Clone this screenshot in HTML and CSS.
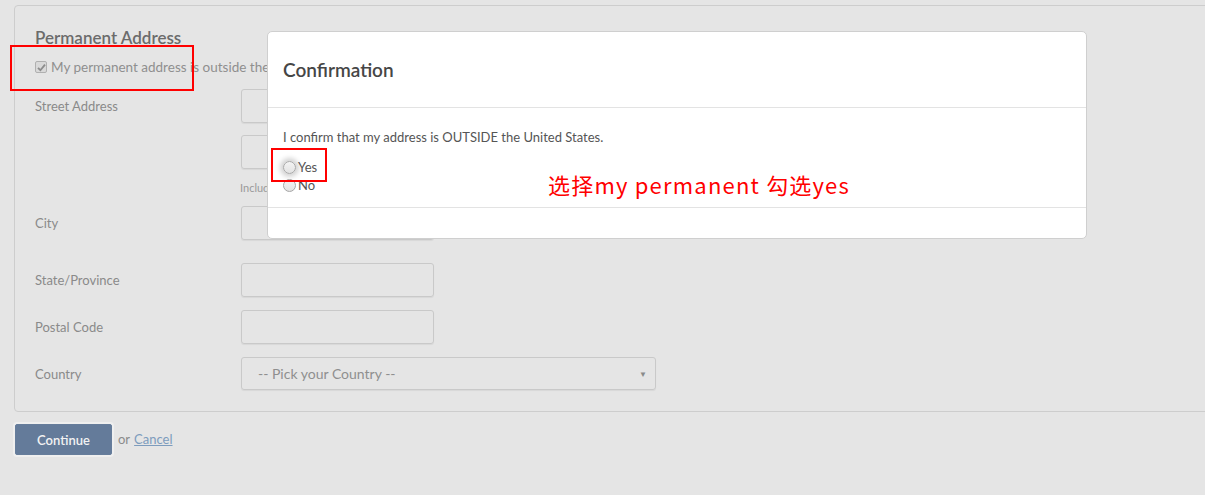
FILE: index.html
```html
<!DOCTYPE html>
<html>
<head>
<meta charset="utf-8">
<link rel="stylesheet" href="styles.css">
</head>
<body>
<div class="page">
  <div class="panel">
    <h2 class="panel-title">Permanent Address</h2>
    <label class="check-row"><span class="checkbox"><svg width="9" height="9" viewBox="0 0 9 9"><path d="M1 4.8 L3.4 7.2 L8 1.6" fill="none" stroke="#8c8c8c" stroke-width="1.8"/></svg></span>My permanent address is outside the</label>
    <div class="form">
      <div class="row">
        <div class="label">Street Address</div>
        <div class="field"><div class="input"></div></div>
      </div>
      <div class="row gap-12">
        <div class="label"></div>
        <div class="field"><div class="input"></div><div class="help">Include</div></div>
      </div>
      <div class="row gap-12">
        <div class="label">City</div>
        <div class="field"><div class="input"></div></div>
      </div>
      <div class="row gap-23">
        <div class="label">State/Province</div>
        <div class="field"><div class="input"></div></div>
      </div>
      <div class="row gap-13">
        <div class="label">Postal Code</div>
        <div class="field"><div class="input"></div></div>
      </div>
      <div class="row gap-13">
        <div class="label short">Country</div>
        <div class="field"><div class="select"><span>-- Pick your Country --</span><span class="arrow">▼</span></div></div>
      </div>
    </div>
  </div>
  <div class="actions">
    <button class="btn">Continue</button>
    <span class="or">or</span>
    <a class="cancel" href="#">Cancel</a>
  </div>

  <div class="modal">
    <div class="modal-header">Confirmation</div>
    <div class="modal-body">
      <p class="confirm-text">I confirm that my address is OUTSIDE the United States.</p>
      <label class="radio-row focused"><span class="radio"></span>Yes</label>
      <label class="radio-row"><span class="radio"></span>No</label>
    </div>
    <div class="modal-footer"></div>
  </div>

  <div class="mark mark-check"></div>
  <div class="mark mark-yes"></div>
  <div class="note">选择my permanent 勾选yes</div>
</div>
</body>
</html>
```
FILE: styles.css
```css
* { box-sizing: border-box; }
html, body {
  margin: 0;
  padding: 0;
  background: #e5e5e5;
  font-family: Lato, "Open Sans", sans-serif;
  overflow: hidden;
}
.page {
  position: relative;
  width: 1205px;
  height: 495px;
  padding: 5px 0 0 14px;
}
.panel {
  width: 1210px;
  border: 1px solid #cdcdcd;
  border-radius: 4px;
  padding: 20px 0 21px 20px;
}
.panel-title {
  margin: 0;
  font-size: 17px;
  line-height: 24px;
  font-weight: 600;
  color: #6b6b6b;
}
.check-row {
  display: flex;
  align-items: center;
  margin-top: 8px;
  height: 18px;
  font-size: 13.5px;
  color: #8f8f8f;
}
.checkbox {
  width: 12px;
  height: 12px;
  margin-right: 4px;
  border: 1px solid #b0b0b0;
  border-radius: 2px;
  background: #d9d9d9;
  display: flex;
  align-items: center;
  justify-content: center;
}
.form { margin-top: 13px; }
.row {
  display: flex;
  align-items: flex-start;
}
.gap-12 { margin-top: 12px; }
.gap-13 { margin-top: 13px; }
.gap-23 { margin-top: 23px; }
.label {
  width: 206px;
  height: 34px;
  display: flex;
  align-items: center;
  font-size: 13px;
  color: #8a8a8a;
}
.label.short { height: 33px; }
.input {
  width: 193px;
  height: 34px;
  border: 1px solid #c9c9c9;
  border-radius: 3px;
  box-shadow: 0 1px 1px rgba(0,0,0,0.06);
}
.help {
  margin-top: 13px;
  font-size: 11px;
  line-height: 12px;
  color: #9a9a9a;
  margin-left: -1px;
}
.select {
  width: 415px;
  height: 33px;
  border: 1px solid #c9c9c9;
  border-radius: 3px;
  box-shadow: 0 1px 1px rgba(0,0,0,0.06);
  display: flex;
  align-items: center;
  justify-content: space-between;
  padding: 0 8px 0 16px;
  font-size: 14px;
  color: #8f8f8f;
}
.arrow { font-size: 8px; color: #8a8a8a; }
.actions {
  display: flex;
  align-items: center;
  margin-top: 12px;
  margin-left: 1px;
}
.btn {
  width: 97px;
  height: 31px;
  border: 1px solid #667d9b;
  border-radius: 2px;
  background: #647b9a;
  box-shadow: 0 0 0 2px #efefef;
  color: #f2f2f2;
  font-family: inherit;
  font-size: 13px;
  font-weight: 600;
  padding: 0;
}
.or {
  margin-left: 6px;
  font-size: 13px;
  color: #8a8a8a;
  margin-top: -2px;
}
.cancel {
  margin-left: 4px;
  font-size: 13px;
  color: #7d9cbd;
  margin-top: -2px;
}
.modal {
  position: absolute;
  left: 267px;
  top: 31px;
  width: 820px;
  height: 208px;
  background: #fff;
  border: 1px solid #cfcfcf;
  border-radius: 5px;
  display: flex;
  flex-direction: column;
}
.modal-header {
  height: 76px;
  padding: 0 15px;
  display: flex;
  align-items: center;
  font-size: 19px;
  font-weight: 600;
  color: #464646;
  border-bottom: 1px solid #e3e3e3;
}
.modal-body {
  height: 100px;
  padding: 21px 15px 0 15px;
  border-bottom: 1px solid #e3e3e3;
}
.confirm-text {
  margin: 0 0 13px 0;
  font-size: 13px;
  line-height: 16px;
  color: #555;
}
.radio-row {
  display: flex;
  align-items: center;
  height: 18px;
  line-height: 16px;
  font-size: 13px;
  color: #555;
}
.radio {
  width: 13px;
  height: 13px;
  margin-right: 2px;
  border-radius: 50%;
  border: 1px solid #a6a6a6;
  background: linear-gradient(#f4f4f4, #e2e2e2);
}
.focused .radio { box-shadow: 0 0 5px 3px rgba(0,0,0,0.18); }
.modal-footer { flex: 1; }
.mark {
  position: absolute;
  border: 2px solid #f00;
}
.mark-check { left: 10px; top: 45px; width: 184px; height: 46px; }
.mark-yes { left: 271px; top: 148px; width: 56px; height: 34px; }
.note {
  position: absolute;
  left: 548px;
  top: 169px;
  font-family: "Noto Sans CJK SC", sans-serif;
  font-size: 22px;
  letter-spacing: 1.2px;
  line-height: 30px;
  color: #f00;
}
```
